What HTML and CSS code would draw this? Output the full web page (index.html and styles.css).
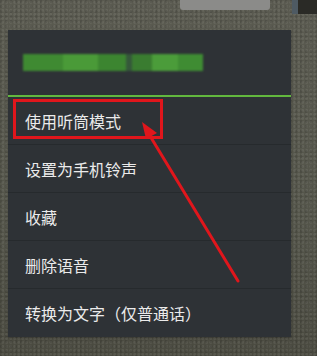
FILE: index.html
```html
<!DOCTYPE html>
<html lang="zh">
<head>
<meta charset="utf-8">
<link rel="stylesheet" href="styles.css">
</head>
<body>
<div class="screen">
  <div class="topbar">
    <div class="chip"></div>
    <div class="corner"></div>
  </div>
  <div class="dialog">
    <div class="header">
      <div class="blurname">
        <span class="b1"></span><span class="b2"></span><span class="b3"></span><span class="gap"></span><span class="b4"></span><span class="b5"></span><span class="b6"></span>
      </div>
    </div>
    <div class="accent"></div>
    <ul class="menu">
      <li class="item">使用听筒模式</li>
      <li class="item">设置为手机铃声</li>
      <li class="item">收藏</li>
      <li class="item">删除语音</li>
      <li class="item">转换为文字（仅普通话）</li>
    </ul>
  </div>
  <div class="highlight"></div>
  <svg class="arrow" width="317" height="356" viewBox="0 0 317 356">
    <line x1="238" y1="281" x2="147" y2="131" stroke="#e0161c" stroke-width="3" stroke-linecap="round"/>
    <polygon points="142,122 157,133 146,139" fill="#e0161c"/>
  </svg>
</div>
</body>
</html>
```
FILE: styles.css
```css
* { box-sizing: border-box; }
html, body { margin: 0; padding: 0; }
body {
  width: 317px;
  height: 356px;
  overflow: hidden;
  background: #56564b;
  font-family: "Noto Sans CJK SC", "Noto Sans", sans-serif;
}
.screen {
  position: relative;
  width: 317px;
  height: 356px;
  background:
    radial-gradient(circle at 20% 30%, rgba(0,0,0,0.12) 0 1px, transparent 2px) 0 0 / 5px 5px,
    radial-gradient(circle at 70% 60%, rgba(255,255,255,0.07) 0 1px, transparent 2px) 0 0 / 4px 4px,
    linear-gradient(180deg, #5a5a50 0%, #54554a 60%, #4a4a40 100%);
}
.topbar {
  height: 30px;
  display: flex;
  align-items: flex-start;
}
.chip {
  margin-left: 180px;
  width: 90px;
  height: 10px;
  background: #8b8b89;
  border-radius: 0 0 3px 3px;
}
.corner {
  margin-left: 22px;
  width: 25px;
  height: 14px;
  background: linear-gradient(90deg, #4e5a63 0 6px, #2a2a26 6px);
}
.dialog {
  margin-left: 8px;
  width: 283px;
  background: #2e3236;
  box-shadow: 0 1px 2px rgba(0,0,0,0.3);
}
.header {
  height: 65px;
  display: flex;
  align-items: center;
  padding-left: 15px;
}
.blurname {
  display: flex;
  height: 17px;
  filter: blur(1.2px);
}
.blurname span { display: block; height: 100%; }
.b1 { width: 40px; background: #3f8a32; }
.b2 { width: 35px; background: #4a9a38; }
.b3 { width: 28px; background: #3c8530; }
.gap { width: 6px; background: #35583a; }
.b4 { width: 20px; background: #3a7c30; }
.b5 { width: 26px; background: #4b9c3a; }
.b6 { width: 25px; background: #3f8c33; }
.accent {
  height: 2px;
  background: #62b83e;
}
.menu {
  list-style: none;
  margin: 0;
  padding: 0;
}
.item {
  height: 48px;
  display: flex;
  align-items: center;
  padding-left: 17px;
  color: #ebebeb;
  font-size: 16px;
  border-bottom: 1px solid #262a2d;
}
.item:last-child { border-bottom: none; }
.highlight {
  position: absolute;
  left: 13px;
  top: 99px;
  width: 150px;
  height: 40px;
  border: 3px solid #e0161c;
}
.arrow {
  position: absolute;
  left: 0;
  top: 0;
}
```
